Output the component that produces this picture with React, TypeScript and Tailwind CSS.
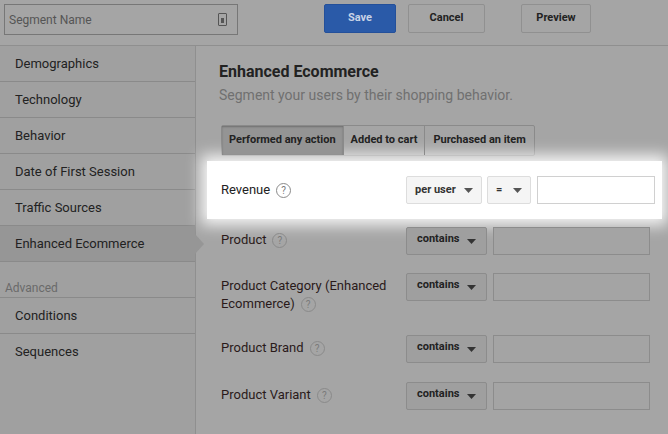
import React from "react";

const Q = () => (
  <span className="inline-flex items-center justify-center w-[15px] h-[15px] rounded-full border border-[#8a8a8a] text-[10px] leading-[13px] text-[#7a7a7a] ml-[6px] align-middle">?</span>
);
const Caret = ({ c = "#555" }: { c?: string }) => (
  <svg width="9" height="5" viewBox="0 0 9 5"><path d="M0 0h9L4.5 5z" fill={c} /></svg>
);

const Sel = ({ label, w }: { label: string; w: string }) => (
  <div className={`${w} h-[28px] border border-[#8c8c8c] bg-[#9f9f9f] rounded-[2px] flex items-center justify-between px-[10px] text-[11px] font-bold text-[#222]`}>
    <span className="-mt-[4px]">{label}</span>
    <Caret c="#333" />
  </div>
);

const Row = ({ label, h }: { label: React.ReactNode; h: string }) => (
  <div className={`flex items-start ${h}`}>
    <div className="w-[185px] text-[13px] text-[#2a1a1a] leading-[18px] pt-[4px]">{label}</div>
    <div className="flex gap-[6px]">
      <Sel label="contains" w="w-[81px]" />
      <div className="w-[157px] h-[28px] border border-[#8c8c8c] bg-[#a4a4a4]" />
    </div>
  </div>
);

export default function App() {
  const items = ["Demographics", "Technology", "Behavior", "Date of First Session", "Traffic Sources"];
  return (
    <div className="w-[668px] h-[434px] bg-[#a5a5a5] overflow-hidden relative" style={{ fontFamily: "Roboto, 'Liberation Sans', sans-serif" }}>
      <div className="h-[46px] border-b border-[#8f8f8f] flex items-start pt-[4px] pl-[4px]">
        <div className="w-[234px] h-[31px] border border-[#777] bg-[#a5a5a5] flex items-center justify-between px-[4px]">
          <span className="text-[12px] text-[#555]">Segment Name</span>
          <div className="w-[9px] h-[13px] border border-[#555] rounded-[1px] mr-[6px] flex items-end justify-center"><div className="w-[3px] h-[5px] bg-[#555] mb-[2px]" /></div>
        </div>
        <div className="ml-[86px] w-[72px] h-[29px] bg-[#2a5aa8] border border-[#24509a] rounded-[2px] flex items-center justify-center text-[11px] font-bold text-[#c8d3e6]">Save</div>
        <div className="ml-[12px] h-[29px] border border-[#909090] rounded-[2px] flex items-center justify-center text-[11px] font-bold text-[#222]" style={{ width: 77 }}>Cancel</div>
        <div className="ml-[36px] w-[70px] h-[29px] border border-[#909090] rounded-[2px] flex items-center justify-center text-[11px] font-bold text-[#222]">Preview</div>
      </div>
      <div className="flex h-[388px]">
        <div className="w-[196px] bg-[#a0a0a0] border-r border-[#8f8f8f] shrink-0">
          {items.map((t) => (
            <div key={t} className="h-[36px] border-b border-[#8a8a8a] flex items-center pl-[15px] text-[13px] text-[#222]">{t}</div>
          ))}
          <div className="h-[36px] border-b border-[#8a8a8a] flex items-center pl-[15px] text-[13px] text-[#222] bg-[#969696] relative">
            Enhanced Ecommerce
            <div className="absolute right-[-9px] top-[8px] w-0 h-0 border-y-[10px] border-y-transparent border-l-[9px] border-l-[#969696]" />
          </div>
          <div className="h-[36px] border-b border-[#8a8a8a] flex items-end pl-[5px] pb-[0px] text-[12px] text-[#6a6a6a]">Advanced</div>
          <div className="h-[36px] border-b border-[#8a8a8a] flex items-center pl-[15px] text-[13px] text-[#222]">Conditions</div>
          <div className="h-[36px] flex items-center pl-[15px] text-[13px] text-[#222]">Sequences</div>
        </div>
        <div className="flex-1 pl-[23px] pt-[14px]">
          <div className="text-[16px] font-bold text-[#222]">Enhanced Ecommerce</div>
          <div className="text-[14px] text-[#707070] mt-[1px]">Segment your users by their shopping behavior.</div>
          <div className="flex mt-[19px] ml-[2px] h-[31px] border border-[#8a8a8a] rounded-[2px] w-fit text-[11px] font-bold text-[#222]">
            <div className="px-[7px] flex items-center bg-[#949494] shadow-[inset_0_1px_2px_rgba(0,0,0,0.25)]">Performed any action</div>
            <div className="px-[7px] flex items-center border-l border-[#8a8a8a]">Added to cart</div>
            <div className="px-[8px] flex items-center border-l border-[#8a8a8a]">Purchased an item</div>
          </div>
          <div className="mt-[5px] -ml-[12px] w-[455px] h-[58px] bg-white shadow-[0_0_14px_6px_rgba(255,255,255,0.9)] flex items-center pl-[14px]">
            <div className="w-[185px] text-[13px] text-[#222] flex items-center">Revenue<Q /></div>
            <div className="flex gap-[5px]">
              <div className="w-[76px] h-[28px] border border-[#ddd] bg-[#f5f5f5] rounded-[2px] flex items-center justify-between px-[8px] text-[11px] font-bold text-[#333]"><span>per user</span><Caret /></div>
              <div className="w-[44px] h-[28px] border border-[#ddd] bg-[#f5f5f5] rounded-[2px] flex items-center justify-between px-[8px] text-[11px] font-bold text-[#333]"><span>=</span><Caret /></div>
              <div className="w-[118px] h-[28px] border border-[#d0d0d0] bg-white ml-[1px]" />
            </div>
          </div>
          <div className="mt-[8px] pl-[2px]">
            <Row h="h-[46px]" label={<>Product<Q /></>} />
            <Row h="h-[62px]" label={<>Product Category (Enhanced Ecommerce)<Q /></>} />
            <Row h="h-[47px]" label={<>Product Brand<Q /></>} />
            <Row h="h-[48px]" label={<>Product Variant<Q /></>} />
          </div>
        </div>
      </div>
    </div>
  );
}
